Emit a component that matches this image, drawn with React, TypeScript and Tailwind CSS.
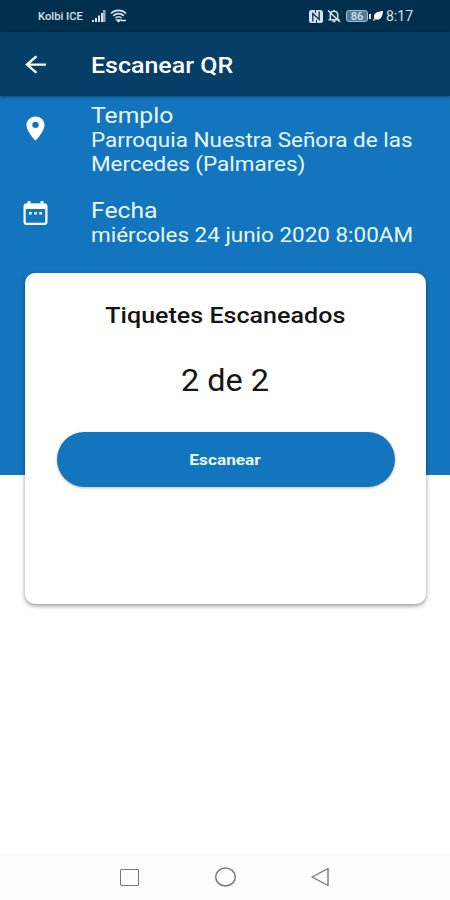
import type { ReactNode } from "react";

function StatusBar() {
  return (
    <div className="flex h-8 items-center justify-between bg-[#032f4f] pl-[38px] pr-[37px] text-[#d3e2ec]">
      <div className="flex items-center">
        <span className="w-[54px] whitespace-nowrap pt-px text-[10px] font-medium leading-3">
          <span className="inline-block origin-left scale-x-[1.12]">Kolbi ICE</span>
        </span>
        <svg className="h-3 w-[14px]" viewBox="0 0 14 12" fill="currentColor">
          <path d="M0 10h2v2H0zM3 8h2v4H3zM6 5.500h2V12H6zM9 3h2v9H9z" />
          <path d="M11 0h2.500v12H11z" opacity=".7" />
        </svg>
        <svg className="ml-1 h-[14px] w-[17px]" viewBox="0 0 17 14" fill="none" stroke="currentColor" strokeWidth="1.700">
          <path d="M1 4.500C5 .3 12 .3 16 4.500M3.200 6.800c3-3 7.600-3 10.600 0M5.500 9c1.700-1.700 4.300-1.700 6 0" />
          <path d="M7 11l1.500 1.600L10 11zM11 11.500h5" />
        </svg>
      </div>
      <div className="flex items-center">
        <svg className="h-[13px] w-[14px]" viewBox="0 0 14 13" fill="none">
          <rect width="14" height="13" rx="2.500" fill="currentColor" />
          <path d="M3.800 11.500V3.500l6.400 6V1.500" stroke="#032f4f" strokeWidth="1.300" />
          <path d="M6.500 0v3M7.500 10v3" stroke="#032f4f" />
        </svg>
        <svg className="ml-[4px] h-[14px] w-[14px]" viewBox="0 0 14 14" fill="none" stroke="currentColor" strokeWidth="1.500">
          <path d="M3.300 10.500V6C3.300 1 10.700 1 10.700 6v4.500M1.500 10.700h11M5.500 12.500h3M7 1v1.500M1 1.500l12 11.500" />
        </svg>
        <div className="ml-[5px] flex h-[12px] w-[22px] items-center justify-center rounded-[3px] border border-[#a5bccb] bg-[#547a94] text-[11px] font-medium leading-none">
          86
        </div>
        <div className="ml-px h-[5px] w-[2px] bg-current" />
        <svg className="ml-[2px] h-[10px] w-[10px] text-white" viewBox="0 0 10 10" fill="currentColor">
          <path d="M10 0C4 .7 1 2 1 5.500c0 .8.200 1.300.500 1.800L0 9l.8 1 1.700-1.700C7 10 9.500 6 10 0z" />
        </svg>
        <span className="ml-[3px] w-[27px] whitespace-nowrap text-[14px] leading-4">
          <span className="inline-block origin-left">8:17</span>
        </span>
      </div>
    </div>
  );
}

function InfoRow({ icon, label, children }: { icon: ReactNode; label: string; children: ReactNode }) {
  return (
    <div className="flex">
      <div className="w-[91px] shrink-0">{icon}</div>
      <div className="origin-left scale-x-[1.123] whitespace-nowrap">
        <div className="text-[22px] leading-[25px]">{label}</div>
        <div className="text-[20px] leading-6">{children}</div>
      </div>
    </div>
  );
}

export default function App() {
  return (
    <div className="flex h-[900px] w-[450px] flex-col overflow-hidden bg-white font-['Roboto',sans-serif]">
      <StatusBar />
      <header className="z-10 flex h-16 shrink-0 items-center bg-[#053e66] text-white shadow-[0_1px_3px_rgba(0,0,0,0.4)]">
        <div className="w-[91px] pl-[20px]">
          <svg className="h-[27px] w-[31px]" viewBox="0 0 24 24" preserveAspectRatio="none" fill="currentColor">
            <path d="M20 11H7.830l5.590-5.590L12 4l-8 8 8 8 1.410-1.410L7.830 13H20v-2z" />
          </svg>
        </div>
        <h1 className="origin-left scale-x-[1.135] whitespace-nowrap pt-0.5 text-[22px] font-medium">Escanear QR</h1>
      </header>
      <section className="flex h-[379px] shrink-0 flex-col bg-[#1275bd] pt-[7px] text-[#e8f8ff]">
        <InfoRow
          label="Templo"
          icon={
            <svg className="ml-[20px] mt-[11px] h-[29px] w-[31px] text-white" viewBox="0 0 24 24" preserveAspectRatio="none" fill="currentColor">
              <path d="M12 2C8.130 2 5 5.130 5 9c0 5.250 7 13 7 13s7-7.750 7-13c0-3.870-3.130-7-7-7zm0 9.500a2.500 2.500 0 1 1 0-5 2.500 2.500 0 0 1 0 5z" />
            </svg>
          }
        >
          Parroquia Nuestra Señora de las
          <br />
          Mercedes (Palmares)
        </InfoRow>
        <div className="mt-[22px]">
          <InfoRow
            label="Fecha"
            icon={
              <svg className="ml-[23px] mt-[3px] h-6 w-[25px] text-white" viewBox="0 0 25 24" fill="none" stroke="currentColor">
                <rect x="1.600" y="3.500" width="21.800" height="19.300" rx="1.800" strokeWidth="2.200" />
                <path d="M1.500 2.800h22V8h-22zM4.500 0h3v4h-3zM17.500 0h3v4h-3z" fill="currentColor" stroke="none" />
                <path d="M6 12.300h2.700m2.500 0h2.600m2.500 0H19" strokeWidth="2.400" />
              </svg>
            }
          >
            miércoles 24 junio 2020 8:00AM
          </InfoRow>
        </div>
        <main className="ml-[25px] mr-[24px] mt-[26px] flex h-[331px] shrink-0 flex-col items-center rounded-[10px] bg-white text-[#151515] shadow-[0_2px_4px_rgba(0,0,0,0.4)]">
          <h2 className="mt-[29px] scale-x-[1.14] whitespace-nowrap text-[22px] font-medium leading-7">Tiquetes Escaneados</h2>
          <p className="mt-[33px] scale-x-[1.045] whitespace-nowrap text-[31px] leading-9">2 de 2</p>
          <button className="mt-[33px] flex h-[55px] w-[338px] items-center justify-center rounded-full bg-[#1275bd] pt-px text-[15px] font-bold text-[#e8f8ff] shadow-[0_1px_3px_rgba(0,0,0,0.25)]">
            <span className="scale-x-[1.15]">Escanear</span>
          </button>
        </main>
      </section>
      <nav className="mt-auto flex h-[46px] items-center bg-[#fcfcfc] pl-[120px] text-[#777]">
        <div className="h-[17px] w-[19px] rounded-[1px] border-[1.500px] border-current" />
        <svg className="ml-[75px] h-5 w-[22px]" viewBox="0 0 22 20" fill="none" stroke="currentColor" strokeWidth="1.400">
          <ellipse cx="11.500" cy="10" rx="9.800" ry="9" />
        </svg>
        <svg className="ml-[75px] h-5 w-[19px]" viewBox="0 0 19 20" fill="none" stroke="currentColor" strokeWidth="1.400" strokeLinejoin="round">
          <path d="M17 1.500v17L1 10z" />
        </svg>
      </nav>
    </div>
  );
}
